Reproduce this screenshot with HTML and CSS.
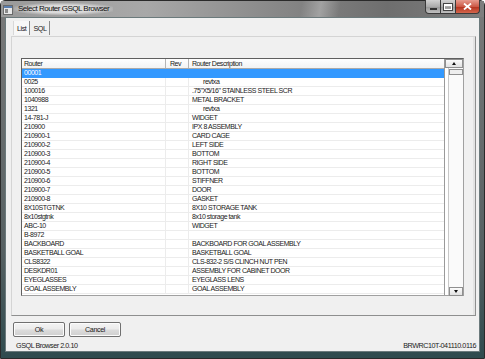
FILE: index.html
```html
<!DOCTYPE html>
<html>
<head>
<meta charset="utf-8">
<link rel="stylesheet" href="styles.css">
</head>
<body>
<div class="window">
  <div class="titlebar">
    <svg class="appicon" width="10" height="10" viewBox="0 0 10 10">
      <rect x="0.5" y="0.5" width="9" height="9" fill="#e8e8e8" stroke="#6a6a6a"/>
      <rect x="1" y="1" width="8" height="2" fill="#5a7fb0"/>
      <rect x="2" y="4" width="3" height="4" fill="#8a8a8a"/>
    </svg>
    <span class="title">Select Router GSQL Browser</span>
    <div class="controls">
      <div class="cbtn min"><span class="minbar"></span></div>
      <div class="cbtn max"><span class="maxbox"></span></div>
      <div class="cbtn close">
        <svg width="9" height="7" viewBox="0 0 9 7"><path d="M1 0.5 L8 6.5 M8 0.5 L1 6.5" stroke="#fff" stroke-width="1.8"/></svg>
      </div>
    </div>
  </div>
  <div class="client">
    <div class="tabs">
      <span class="tab active">List</span>
      <span class="tab">SQL</span>
    </div>
    <div class="panel">
      <div class="grid">
        <div class="table">
          <div class="row head"><div class="c c1">Router</div><div class="c c2">Rev</div><div class="c c3">Router Description</div></div>
          <div class="row sel"><div class="c c1">00001</div><div class="c c2"></div><div class="c c3"></div></div>
          <div class="row"><div class="c c1">0025</div><div class="c c2"></div><div class="c c3 indent">revtxa</div></div>
          <div class="row"><div class="c c1">100016</div><div class="c c2"></div><div class="c c3">.75"X5/16" STAINLESS STEEL SCR</div></div>
          <div class="row"><div class="c c1">1040988</div><div class="c c2"></div><div class="c c3">METAL BRACKET</div></div>
          <div class="row"><div class="c c1">1321</div><div class="c c2"></div><div class="c c3 indent">revtxa</div></div>
          <div class="row"><div class="c c1">14-781-J</div><div class="c c2"></div><div class="c c3">WIDGET</div></div>
          <div class="row"><div class="c c1">210900</div><div class="c c2"></div><div class="c c3">IPX 8 ASSEMBLY</div></div>
          <div class="row"><div class="c c1">210900-1</div><div class="c c2"></div><div class="c c3">CARD CAGE</div></div>
          <div class="row"><div class="c c1">210900-2</div><div class="c c2"></div><div class="c c3">LEFT SIDE</div></div>
          <div class="row"><div class="c c1">210900-3</div><div class="c c2"></div><div class="c c3">BOTTOM</div></div>
          <div class="row"><div class="c c1">210900-4</div><div class="c c2"></div><div class="c c3">RIGHT SIDE</div></div>
          <div class="row"><div class="c c1">210900-5</div><div class="c c2"></div><div class="c c3">BOTTOM</div></div>
          <div class="row"><div class="c c1">210900-6</div><div class="c c2"></div><div class="c c3">STIFFNER</div></div>
          <div class="row"><div class="c c1">210900-7</div><div class="c c2"></div><div class="c c3">DOOR</div></div>
          <div class="row"><div class="c c1">210900-8</div><div class="c c2"></div><div class="c c3">GASKET</div></div>
          <div class="row"><div class="c c1">8X10STGTNK</div><div class="c c2"></div><div class="c c3">8X10 STORAGE TANK</div></div>
          <div class="row"><div class="c c1">8x10stgtnk</div><div class="c c2"></div><div class="c c3">8x10 storage tank</div></div>
          <div class="row"><div class="c c1">ABC-10</div><div class="c c2"></div><div class="c c3">WIDGET</div></div>
          <div class="row"><div class="c c1">B-8972</div><div class="c c2"></div><div class="c c3"></div></div>
          <div class="row"><div class="c c1">BACKBOARD</div><div class="c c2"></div><div class="c c3">BACKBOARD FOR GOAL ASSEMBLY</div></div>
          <div class="row"><div class="c c1">BASKETBALL GOAL</div><div class="c c2"></div><div class="c c3">BASKETBALL GOAL</div></div>
          <div class="row"><div class="c c1">CLS8322</div><div class="c c2"></div><div class="c c3">CLS-832-2 S/S CLINCH NUT PEN</div></div>
          <div class="row"><div class="c c1">DESKDR01</div><div class="c c2"></div><div class="c c3">ASSEMBLY FOR CABINET DOOR</div></div>
          <div class="row"><div class="c c1">EYEGLASSES</div><div class="c c2"></div><div class="c c3">EYEGLASS LENS</div></div>
          <div class="row"><div class="c c1">GOAL ASSEMBLY</div><div class="c c2"></div><div class="c c3">GOAL ASSEMBLY</div></div>
        </div>
        <div class="vscroll">
          <div class="sbtn up"><span class="tri-up"></span></div>
          <div class="track">
            <div class="thumb"></div>
            <div class="sbtn down"><span class="tri-down"></span></div>
          </div>
        </div>
      </div>
    </div>
    <div class="buttons">
      <button class="btn">Ok</button>
      <button class="btn">Cancel</button>
    </div>
    <div class="status">
      <span>GSQL Browser 2.0.10</span>
      <span>BRWRC10T-041110.0116</span>
    </div>
  </div>
</div>
</body>
</html>
```
FILE: styles.css
```css
* { box-sizing: border-box; }
html, body { margin: 0; padding: 0; }
body {
  width: 485px;
  height: 359px;
  overflow: hidden;
  font-family: "Liberation Sans", Arial, sans-serif;
  font-size: 7px;
  letter-spacing: -0.45px;
  color: #1a1a1a;
}
.window {
  width: 485px;
  height: 359px;
  background: linear-gradient(180deg, #7a7a7a 0%, #566062 70%, #2f4b4e 100%);
  padding: 0 4px 6px 4px;
  display: flex;
  flex-direction: column;
  border: 1px solid #2a2a2a;
  border-radius: 5px 5px 0 0;
}
.titlebar {
  height: 16px;
  display: flex;
  align-items: center;
  margin: 0 -4px;
  padding-left: 2px;
  background:
    linear-gradient(100deg, rgba(255,255,255,0) 0%, rgba(255,255,255,0) 62%, rgba(255,255,255,0.28) 66%, rgba(255,255,255,0) 70%, rgba(255,255,255,0) 100%),
    linear-gradient(90deg, #9a9a9a 0%, #a8a8a8 30%, #8a8a8a 55%, #6e6e6e 80%, #7e7e7e 100%);
  position: relative;
}
.appicon { flex: none; margin-top: 1px; }
.title {
  margin-left: 1px;
  font-size: 8px;
  letter-spacing: -0.5px;
  color: #111;
  padding: 0 4px;
  background: radial-gradient(ellipse at center, rgba(225,225,225,0.9) 45%, rgba(225,225,225,0) 78%);
  line-height: 12px;
}
.controls {
  position: absolute;
  right: 4px;
  top: -1px;
  display: flex;
}
.cbtn {
  height: 14px;
  border: 1px solid #3a3a3a;
  border-top: none;
  display: flex;
  align-items: center;
  justify-content: center;
}
.cbtn.min {
  width: 16px;
  border-radius: 0 0 0 4px;
  background: linear-gradient(180deg, #d2d2d2 0%, #acacac 50%, #959595 51%, #c0c0c0 100%);
}
.cbtn.max {
  width: 15px;
  border-left: none;
  background: linear-gradient(180deg, #d2d2d2 0%, #acacac 50%, #959595 51%, #c0c0c0 100%);
}
.cbtn.close {
  width: 24px;
  border-left: none;
  border-radius: 0 0 4px 0;
  background: linear-gradient(180deg, #e79b8e 0%, #cc5a47 50%, #b3301c 51%, #d3664c 100%);
}
.minbar { width: 7px; height: 2px; background: #fff; border: 0.5px solid #333; margin-top: 5px; }
.maxbox { width: 8px; height: 6px; border: 1px solid #fff; border-top-width: 2px; outline: 0.5px solid #444; }
.client {
  flex: 1;
  background: #f0f0f0;
  display: flex;
  flex-direction: column;
  border: 1px solid #6b7a7c;
}
.tabs {
  display: flex;
  padding: 3px 0 0 7px;
  height: 18px;
}
.tab {
  height: 14px;
  padding: 3px 3px 0 3px;
  border-right: 1px solid #8a8a8a;
  line-height: 9px;
  font-size: 7.2px;
}
.tab.active { background: #f7f7f7; border-left: 1px solid #d8d8d8; }
.panel {
  height: 280px;
  margin: 0 3px 0 5px;
  border: 1px solid #d4d4d4;
  border-right: 1px solid #8e8f8f;
  border-bottom: 1px solid #8e8f8f;
  box-shadow: inset -2px 0 0 #e3e3e3;
  padding: 21px 0 0 9px;
  background: #f0f0f0;
}
.grid {
  width: 443px;
  height: 238px;
  border: 1px solid #5f5f5f;
  border-right-color: #a0a0a0;
  border-bottom-color: #a0a0a0;
  background: #fff;
  display: flex;
}
.table { width: 422px; }
.row {
  display: flex;
  height: 9px;
  border-bottom: 1px solid #ececec;
  line-height: 8px;
}
.row.head {
  height: 10px;
  line-height: 9px;
  border-bottom: 1px solid #a9a9a9;
  background: linear-gradient(180deg, #ffffff 0%, #f3f3f3 100%);
}
.c {
  white-space: nowrap;
  overflow: hidden;
  border-right: 1px solid #ececec;
}
.head .c { border-right-color: #b5b5b5; }
.c1 { width: 144px; padding-left: 2px; }
.c2 { width: 23px; padding-left: 4px; }
.c3 { flex: 1; padding-left: 3px; border-right: none; }
.c3.indent { padding-left: 14px; }
.row.sel { background: #3399ff; color: #fff; border-bottom-color: #3399ff; }
.row.sel .c { border-right-color: #3399ff; }
.vscroll {
  width: 19px;
  display: flex;
  flex-direction: column;
  border-left: 1px solid #9a9a9a;
}
.sbtn {
  height: 9px;
  border: 1px solid #8f8f8f;
  background: linear-gradient(180deg, #fbfbfb 0%, #e2e2e2 100%);
  display: flex;
  align-items: center;
  justify-content: center;
}
.track {
  flex: 1;
  margin-left: 3px;
  border-left: 1px solid #c8c8c8;
  background: #fafafa;
  display: flex;
  flex-direction: column;
  justify-content: space-between;
  padding-top: 1px;
}
.thumb {
  height: 6px;
  border: 1px solid #8f8f8f;
  background: #eeeeee;
}
.sbtn.down { height: 9px; margin-bottom: -1px; }
.tri-up { width: 0; height: 0; border-left: 2.5px solid transparent; border-right: 2.5px solid transparent; border-bottom: 3px solid #111; }
.tri-down { width: 0; height: 0; border-left: 2.5px solid transparent; border-right: 2.5px solid transparent; border-top: 3px solid #111; }
.buttons {
  display: flex;
  gap: 4px;
  padding: 6px 0 0 7px;
}
.btn {
  width: 52px;
  height: 15px;
  padding: 0;
  font-family: inherit;
  font-size: 7.2px;
  letter-spacing: -0.4px;
  color: #1a1a1a;
  border: 1px solid #707070;
  border-radius: 2px;
  background: linear-gradient(180deg, #f4f4f4 0%, #ebebeb 48%, #dcdcdc 52%, #cfcfcf 100%);
  box-shadow: inset 0 0 0 1px #fcfcfc;
  line-height: 12px;
}
.status {
  flex: 1;
  display: flex;
  justify-content: space-between;
  align-items: flex-end;
  padding: 0 3px 1px 10px;
  font-size: 7.2px;
  line-height: 9px;
}
```
